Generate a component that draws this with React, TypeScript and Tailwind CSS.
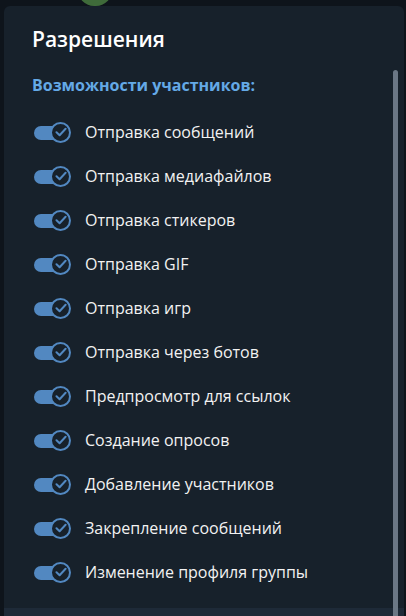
const items = [
  'Отправка сообщений',
  'Отправка медиафайлов',
  'Отправка стикеров',
  'Отправка GIF',
  'Отправка игр',
  'Отправка через ботов',
  'Предпросмотр для ссылок',
  'Создание опросов',
  'Добавление участников',
  'Закрепление сообщений',
  'Изменение профиля группы',
];

const Toggle = () => (
  <div className="relative w-[37px] h-[21px] shrink-0">
    <div className="absolute left-0 top-[4px] w-[30px] h-[14px] rounded-full bg-[#5288c1]" />
    <div className="absolute right-0 top-0 w-[21px] h-[21px] rounded-full bg-[#17212b] border-2 border-[#5288c1] flex items-center justify-center">
      <svg width="12" height="10" viewBox="0 0 12 10" fill="none">
        <path d="M1.5 5.2 L4.6 8.2 L10.6 1.8" stroke="#5288c1" strokeWidth="2" strokeLinecap="round" strokeLinejoin="round" />
      </svg>
    </div>
  </div>
);

export default function App() {
  return (
    <div className="relative h-[616px] w-[406px] overflow-hidden bg-[#0e141b] font-['Open_Sans',sans-serif]">
      {/* avatar peeking behind the dialog */}
      <div className="absolute left-[78px] top-[-26px] w-[34px] h-[32px] rounded-full bg-[#3f6b3a]" />
      <div className="relative mt-[6px] ml-[4px] mr-[2px] h-[610px] rounded-t-[6px] bg-[#17212b] flex flex-col">
        <div className="absolute right-[6px] top-[64px] bottom-0 w-[5px] rounded-t-full bg-[#6b7785]" />
        <h1 className="pl-[28px] pt-[19px] text-[21px] leading-[29px] font-semibold text-white">Разрешения</h1>
        <h2 className="pl-[28px] mt-[21px] text-[16px] leading-[21px] font-bold text-[#64a9e6]">
          Возможности участников:
        </h2>
        <div className="flex flex-col pl-[30px] mt-[14px]">
          {items.map((t) => (
            <div key={t} className="flex items-center h-[44px] gap-[14px]">
              <Toggle />
              <span className="text-[16px] text-[#f2f2f2]">{t}</span>
            </div>
          ))}
        </div>
        <div className="mt-auto h-[8px] bg-[#1e2a38]" />
      </div>
    </div>
  );
}
